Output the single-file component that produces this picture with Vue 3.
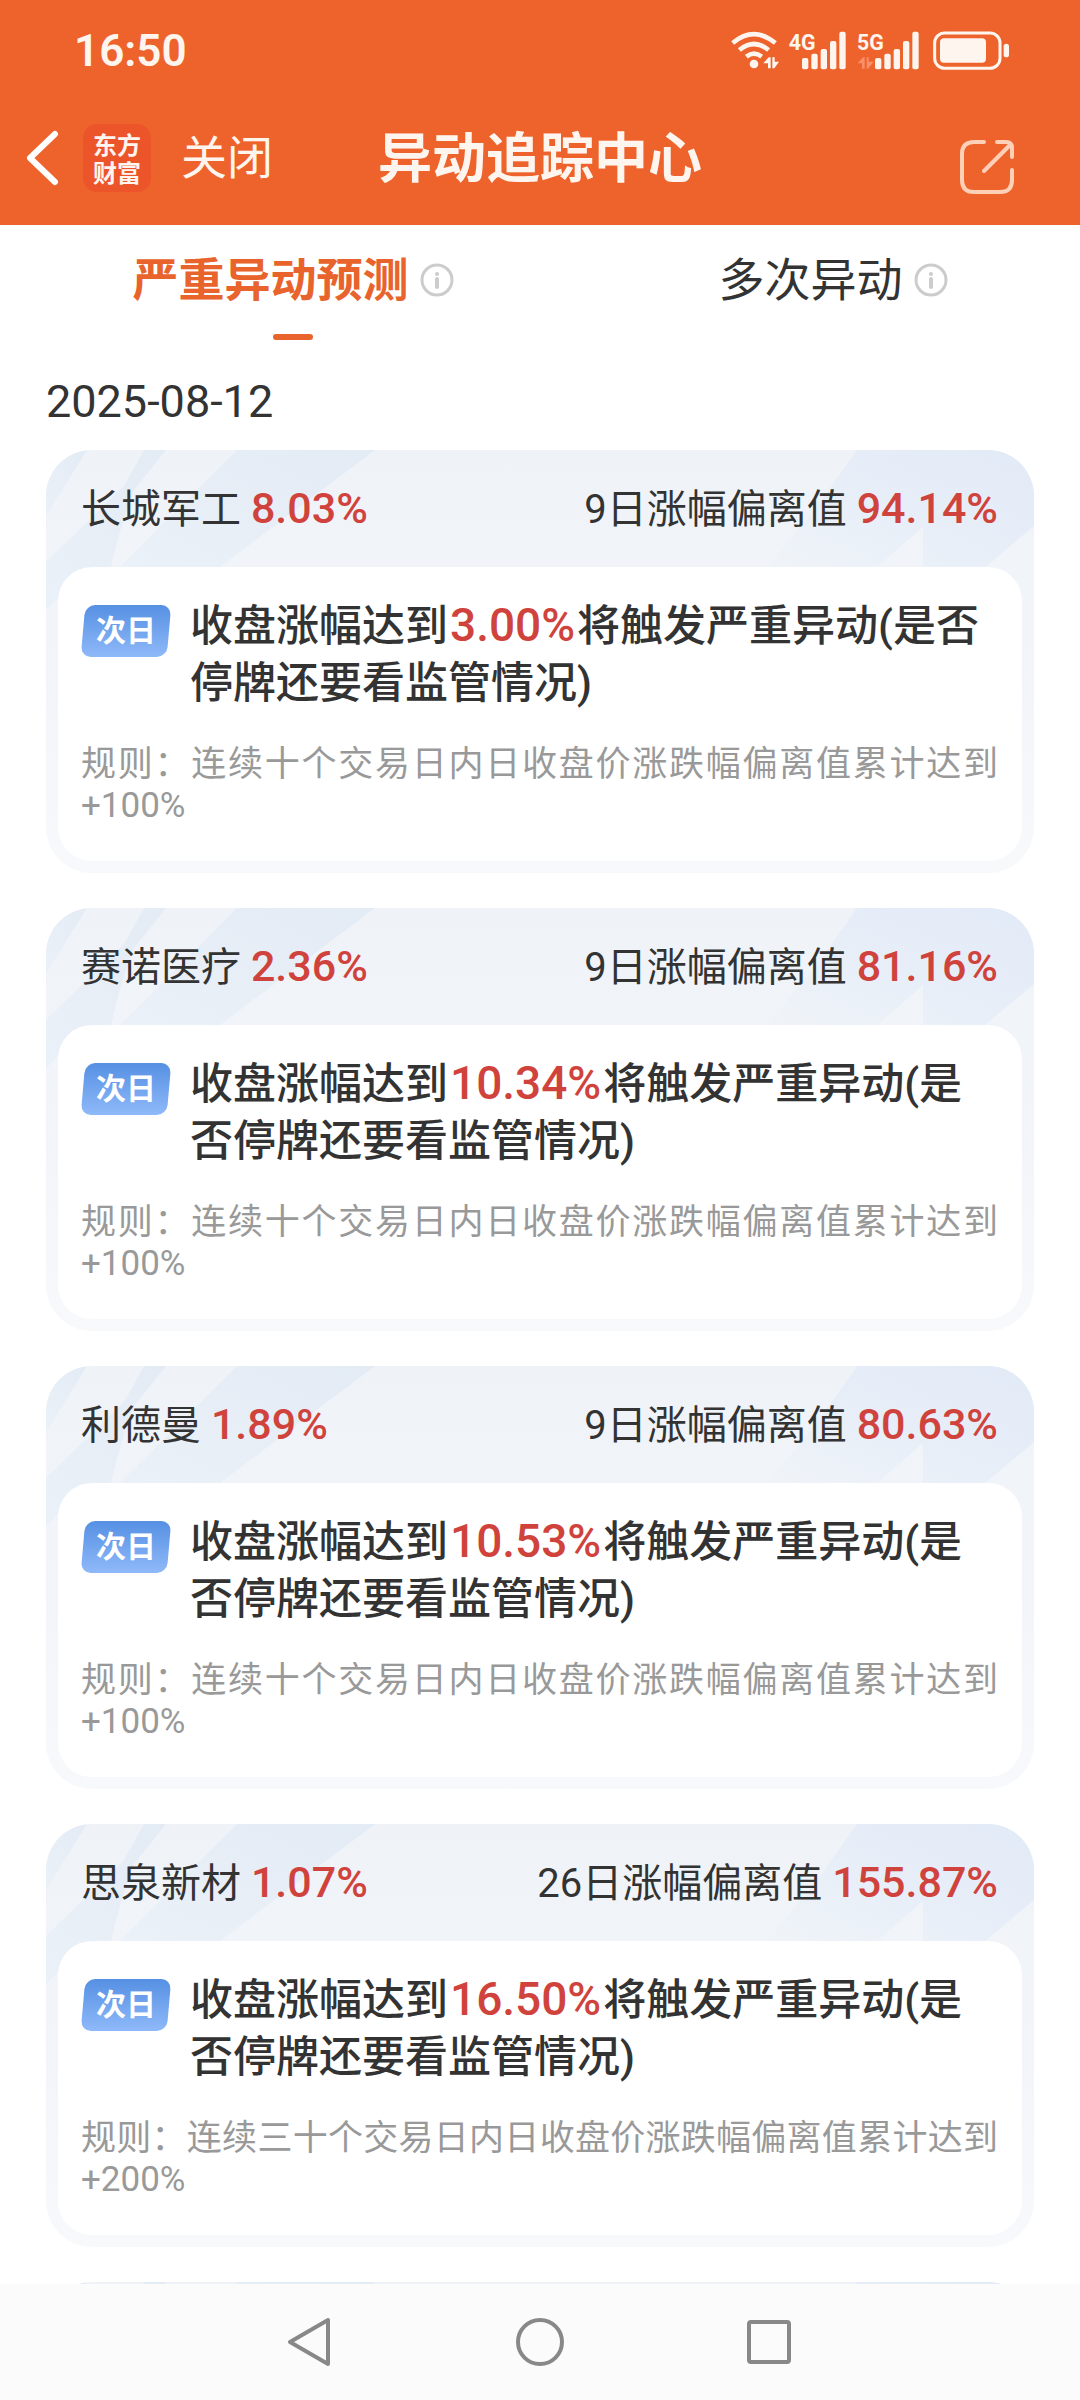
<script setup>
import { ref } from 'vue'

const tabs = [
  { id: 'forecast', label: '严重异动预测' },
  { id: 'multiple', label: '多次异动' },
]
const activeTab = ref('forecast')

const date = '2025-08-12'

const stocks = [
  { name: '长城军工', change: '8.03%', days: 9, deviation: '94.14%', trigger: '3.00%', period: '十', limit: '+100%' },
  { name: '赛诺医疗', change: '2.36%', days: 9, deviation: '81.16%', trigger: '10.34%', period: '十', limit: '+100%' },
  { name: '利德曼', change: '1.89%', days: 9, deviation: '80.63%', trigger: '10.53%', period: '十', limit: '+100%' },
  { name: '思泉新材', change: '1.07%', days: 26, deviation: '155.87%', trigger: '16.50%', period: '三十', limit: '+200%' },
  null, // next card, still loading
]

// x, top of each signal bar
const bars = [
  [0, 114],
  [28, 101],
  [56, 87],
  [84, 63],
  [112, 35],
]
</script>

<template>
  <div class="page">
    <header class="header">
      <div class="status">
        <span class="status__time">16:50</span>
        <svg class="status__icons" viewBox="30 30 840 126" aria-hidden="true">
          <g fill="none" stroke="#fff5ef" stroke-width="14">
            <path d="M38 69Q102 16 166 69" />
            <path d="M58 90Q102 54 146 90" />
            <path d="M79 110Q102 92 125 110" />
          </g>
          <circle cx="102" cy="132" r="13" fill="#fff5ef" />
          <path d="M130 130L146 112H152V145H144V130ZM157 112H164V125H177L163 145H157Z" fill="#fff5ef" />
          <text x="206" y="90" class="status__net">4G</text>
          <rect
            v-for="[x, y] in bars"
            :key="'a' + x"
            :x="x + 246"
            :y="y"
            width="19"
            :height="148 - y"
            rx="6"
            fill="#fff5ef"
          />
          <text x="411" y="90" class="status__net">5G</text>
          <path d="M413 130L429 112H434V146H426V130ZM440 112H446V125H461L444 146H440Z" fill="#fa8f68" />
          <rect
            v-for="[x, y] in bars"
            :key="'b' + x"
            :x="x + 465"
            :y="y"
            width="19"
            :height="148 - y"
            rx="6"
            fill="#fff5ef"
          />
          <rect x="644" y="39" width="196" height="106" rx="30" fill="none" stroke="#fff5ef" stroke-width="9" />
          <rect x="660" y="55" width="138" height="73" rx="12" fill="#fff5ef" />
          <rect x="851" y="71" width="16" height="41" rx="8" fill="#fff5ef" />
        </svg>
      </div>

      <div class="navbar">
        <div class="navbar__left">
          <button class="navbar__back" aria-label="返回">
            <svg width="34" height="56" viewBox="0 0 34 56" fill="none" stroke="#fff" stroke-width="6" stroke-linecap="round" stroke-linejoin="round">
              <path d="M29 4L4 28L29 52" />
            </svg>
          </button>
          <span class="navbar__logo"><span>东方</span><span>财富</span></span>
          <button class="navbar__close">关闭</button>
        </div>
        <h1 class="navbar__title">异动追踪中心</h1>
        <button class="navbar__share" aria-label="分享">
          <svg width="54" height="54" viewBox="0 0 54 54" fill="none" stroke="#ffd0b8" stroke-width="4" stroke-linecap="round" stroke-linejoin="round">
            <path d="M24 2H14Q2 2 2 14V40Q2 52 14 52H40Q52 52 52 40V30" />
            <path d="M37 2H46Q52 2 52 8V17" />
            <path d="M24 31L50 5" />
          </svg>
        </button>
      </div>
    </header>

    <main class="content">
      <nav class="tabs">
        <div
          v-for="tab in tabs"
          :key="tab.id"
          class="tab"
          :class="{ 'tab--active': tab.id === activeTab }"
        >
          <button class="tab__btn" @click="activeTab = tab.id">{{ tab.label }}</button>
          <svg class="tab__info" viewBox="0 0 34 34" aria-hidden="true">
            <circle cx="17" cy="17" r="15" fill="none" stroke="#ccc" stroke-width="3" />
            <circle cx="17" cy="11" r="2" fill="#ccc" />
            <path d="M17 16V24" stroke="#ccc" stroke-width="4" stroke-linecap="round" />
          </svg>
        </div>
      </nav>

      <p class="date">{{ date }}</p>

      <div class="list">
        <article v-for="(stock, i) in stocks" :key="i" class="card">
          <svg class="card__deco card__deco--left" viewBox="0 0 340 160" aria-hidden="true">
            <defs>
              <linearGradient :id="'dl' + i" x1="1" y1="0" x2="0" y2="1">
                <stop offset="0" stop-color="#e3ebf5" />
                <stop offset="1" stop-color="#ebf1f8" />
              </linearGradient>
            </defs>
            <g :fill="'url(#dl' + i + ')'">
              <path d="M0 0H41L0 66Z" />
              <path d="M98 0H120L88 40Q74 76 65 117L30 130L0 160V112L78 36Z" />
              <path d="M191 0H329L174 117H74Z" />
            </g>
          </svg>
          <svg class="card__deco card__deco--right" viewBox="0 0 268 160" aria-hidden="true">
            <defs>
              <linearGradient :id="'dr' + i" x1="1" y1="0" x2="0" y2="1">
                <stop offset="0" stop-color="#e2eaf7" />
                <stop offset="0.5" stop-color="#e7eef8" />
                <stop offset="1" stop-color="#f0f4f8" />
              </linearGradient>
            </defs>
            <path d="M91 0H268V76L219 117H157V77L111 117H1L50 58Z" :fill="'url(#dr' + i + ')'" />
          </svg>

          <template v-if="stock">
            <div class="card__head">
              <span>{{ stock.name }} <b class="num">{{ stock.change }}</b></span>
              <span>{{ stock.days }}日涨幅偏离值 <b class="num">{{ stock.deviation }}</b></span>
            </div>
            <div class="card__body">
              <div class="card__main">
                <span class="badge">次日</span>
                <p class="card__text">收盘涨幅达到<b class="trigger">{{ stock.trigger }}</b>将触发严重异动(是否停牌还要看监管情况)</p>
              </div>
              <p class="card__rule">规则：连续{{ stock.period }}个交易日内日收盘价涨跌幅偏离值累计达到{{ stock.limit }}</p>
            </div>
          </template>
        </article>
      </div>
    </main>

    <footer class="sysbar">
      <button aria-label="返回">
        <svg width="48" height="52" viewBox="0 0 48 52" fill="none" stroke="#888" stroke-width="4" stroke-linejoin="round">
          <path d="M42 4V48L4 26Z" />
        </svg>
      </button>
      <button aria-label="主页">
        <svg width="48" height="52" viewBox="0 0 48 52" fill="none" stroke="#888" stroke-width="4">
          <circle cx="24" cy="26" r="22" />
        </svg>
      </button>
      <button aria-label="最近任务">
        <svg width="48" height="52" viewBox="0 0 48 52" fill="none" stroke="#888" stroke-width="4">
          <rect x="3" y="6" width="40" height="40" rx="2" />
        </svg>
      </button>
    </footer>
  </div>
</template>

<style>
body {
  background: #fff;
}
</style>

<style scoped>
.page {
  display: flex;
  flex-direction: column;
  height: 100vh;
  font-family: Roboto, "Noto Sans CJK SC", sans-serif;
  color: #333;
}

button {
  display: block;
  padding: 0;
  border: none;
  background: none;
  color: inherit;
  font: inherit;
  cursor: pointer;
}

svg {
  display: block;
}

p,
h1 {
  margin: 0;
}

/* header */
.header {
  flex: none;
  padding-bottom: 11px;
  background: #ed632b;
  color: #fff5ef;
}

.status {
  display: flex;
  align-items: center;
  justify-content: space-between;
  height: 102px;
  padding: 0 70px 0 74px;
}

.status__time {
  font-size: 44px;
  font-weight: 600;
}

.status__icons {
  width: 280px;
  height: 42px;
}

.status__net {
  font-size: 64px;
  font-weight: 700;
  fill: #fff5ef;
}

.navbar {
  display: grid;
  grid-template-columns: 1fr auto 1fr;
  align-items: center;
  height: 112px;
  padding: 0 26px;
}

.navbar__left {
  display: flex;
  align-items: center;
}

.navbar__logo {
  display: flex;
  flex-direction: column;
  align-items: center;
  justify-content: center;
  width: 68px;
  height: 68px;
  margin: 0 30px 0 23px;
  border-radius: 14px;
  background: #ec5429;
  font-family: "Noto Sans CJK SC", sans-serif;
  font-size: 24px;
  font-weight: 700;
  line-height: 28px;
}

.navbar__close {
  font-size: 46px;
  line-height: 60px;
}

.navbar__title {
  padding-top: 4px;
  font-size: 54px;
  font-weight: 700;
  line-height: 72px;
}

.navbar__share {
  justify-self: end;
  margin-right: 40px;
  padding-top: 18px;
}

/* tabs */
.content {
  flex: 1;
  min-height: 0;
  overflow: hidden;
}

.tabs {
  display: grid;
  grid-template-columns: 1fr 1fr;
  padding-top: 26px;
}

.tab {
  position: relative;
  display: flex;
  align-items: center;
  justify-content: center;
  gap: 11px;
  padding: 0 0 31px 46px;
}

.tab__btn {
  font-size: 46px;
  line-height: 58px;
}

.tab__info {
  width: 34px;
  height: 34px;
}

.tab--active .tab__btn {
  color: #e8642c;
  font-weight: 700;
}

.tab--active::after {
  content: "";
  position: absolute;
  bottom: 0;
  left: calc(50% + 23px);
  width: 40px;
  height: 6px;
  margin-left: -20px;
  border-radius: 3px;
  background: #e8642c;
}

.date {
  padding: 32px 46px 18px;
  font-size: 45px;
  line-height: 60px;
}

/* cards */
.list {
  display: flex;
  flex-direction: column;
  gap: 35px;
  padding: 0 46px;
}

.card {
  position: relative;
  min-height: 423px;
  box-sizing: border-box;
  padding: 0 12px 12px;
  border-radius: 46px;
  overflow: hidden;
  background: linear-gradient(#eff3f8, #f3f5fa 60%, #f8f9fb);
}

.card__deco {
  position: absolute;
  top: 0;
  height: 160px;
}

.card__deco--left {
  left: 0;
  width: 340px;
}

.card__deco--right {
  right: 0;
  width: 268px;
}

.card__head {
  position: relative;
  display: flex;
  align-items: center;
  justify-content: space-between;
  box-sizing: border-box;
  height: 117px;
  padding: 0 24px 6px 23px;
  font-size: 40px;
}

.num {
  color: #d0433c;
  font-size: 43px;
  font-weight: 500;
}

.card__body {
  position: relative;
  padding: 31px 24px 35px 23px;
  border-radius: 34px;
  background: #fff;
}

.card__main {
  display: flex;
  align-items: flex-start;
  gap: 19px;
}

.badge {
  position: relative;
  z-index: 0;
  flex: none;
  width: 90px;
  margin-top: 7px;
  color: #fff;
  font-size: 30px;
  font-weight: 700;
  line-height: 52px;
  text-align: center;
}

.badge::before {
  content: "";
  position: absolute;
  z-index: -1;
  inset: 0 2px;
  border-radius: 10px;
  background: linear-gradient(#5690e3, #8fb9f9);
  transform: skewX(-5deg);
}

.card__text {
  flex: 1;
  font-size: 43px;
  font-weight: 500;
  line-height: 57px;
}

.trigger {
  margin: 0 2px;
  color: #d0433c;
  font-size: 46px;
  font-weight: 500;
  line-height: 1;
}

.card__rule {
  margin-top: 32px;
  color: #999;
  font-size: 35px;
  line-height: 41px;
  text-align: justify;
}

/* system navigation */
.sysbar {
  display: flex;
  flex: none;
  align-items: center;
  justify-content: center;
  gap: 182px;
  height: 116px;
  background: #fbfbfb;
}
</style>
